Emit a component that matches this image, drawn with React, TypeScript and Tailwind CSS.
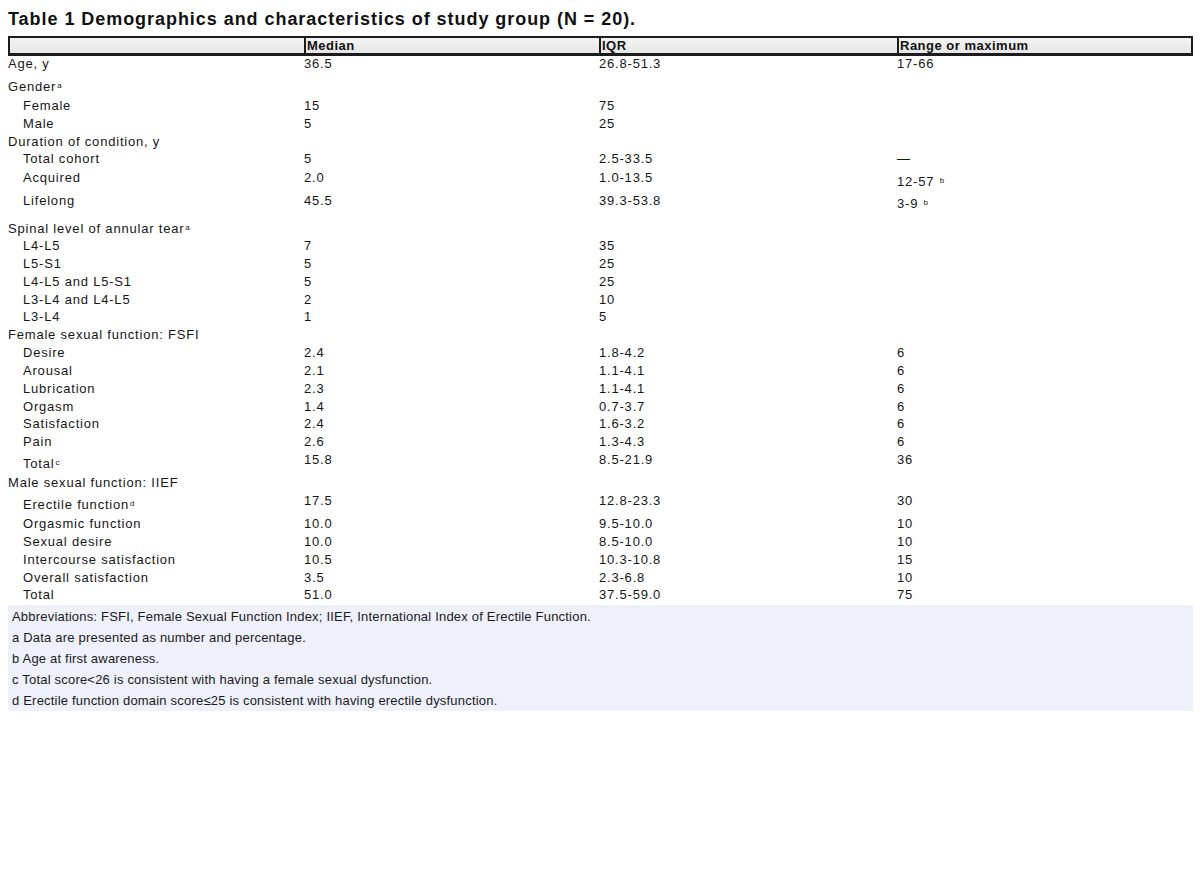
import React from "react";

type Row = {
  label: React.ReactNode;
  indent?: boolean;
  med?: string;
  iqr?: string;
  range?: React.ReactNode;
  mt: string;
};

const Sup = ({ c }: { c: string }) => (
  <sup className="text-[8px] relative -top-[3px] ml-[1px]">{c}</sup>
);

const rows: Row[] = [
  { label: "Age, y", med: "36.5", iqr: "26.8-51.3", range: "17-66", mt: "mt-[1px]" },
  { label: <>Gender<Sup c="a" /></>, mt: "mt-[9px]" },
  { label: "Female", indent: true, med: "15", iqr: "75", mt: "mt-[5px]" },
  { label: "Male", indent: true, med: "5", iqr: "25", mt: "mt-[4px]" },
  { label: "Duration of condition, y", mt: "mt-[4px]" },
  { label: "Total cohort", indent: true, med: "5", iqr: "2.5-33.5", range: "—", mt: "mt-[3px]" },
  { label: "Acquired", indent: true, med: "2.0", iqr: "1.0-13.5", range: <span className="relative top-[4px]">12-57 <Sup c="b" /></span>, mt: "mt-[5px]" },
  { label: "Lifelong", indent: true, med: "45.5", iqr: "39.3-53.8", range: <span className="relative top-[3px]">3-9 <Sup c="b" /></span>, mt: "mt-[9px]" },
  { label: <>Spinal level of annular tear<Sup c="a" /></>, mt: "mt-[14px]" },
  { label: "L4-L5", indent: true, med: "7", iqr: "35", mt: "mt-[3px]" },
  { label: "L5-S1", indent: true, med: "5", iqr: "25", mt: "mt-[4px]" },
  { label: "L4-L5 and L5-S1", indent: true, med: "5", iqr: "25", mt: "mt-[4px]" },
  { label: "L3-L4 and L4-L5", indent: true, med: "2", iqr: "10", mt: "mt-[4px]" },
  { label: "L3-L4", indent: true, med: "1", iqr: "5", mt: "mt-[3px]" },
  { label: "Female sexual function: FSFI", mt: "mt-[4px]" },
  { label: "Desire", indent: true, med: "2.4", iqr: "1.8-4.2", range: "6", mt: "mt-[4px]" },
  { label: "Arousal", indent: true, med: "2.1", iqr: "1.1-4.1", range: "6", mt: "mt-[4px]" },
  { label: "Lubrication", indent: true, med: "2.3", iqr: "1.1-4.1", range: "6", mt: "mt-[4px]" },
  { label: "Orgasm", indent: true, med: "1.4", iqr: "0.7-3.7", range: "6", mt: "mt-[4px]" },
  { label: "Satisfaction", indent: true, med: "2.4", iqr: "1.6-3.2", range: "6", mt: "mt-[3px]" },
  { label: "Pain", indent: true, med: "2.6", iqr: "1.3-4.3", range: "6", mt: "mt-[4px]" },
  { label: <span className="relative top-[4px]">Total<Sup c="c" /></span>, indent: true, med: "15.8", iqr: "8.5-21.9", range: "36", mt: "mt-[4px]" },
  { label: "Male sexual function: IIEF", mt: "mt-[9px]" },
  { label: <span className="relative top-[4px]">Erectile function<Sup c="d" /></span>, indent: true, med: "17.5", iqr: "12.8-23.3", range: "30", mt: "mt-[4px]" },
  { label: "Orgasmic function", indent: true, med: "10.0", iqr: "9.5-10.0", range: "10", mt: "mt-[9px]" },
  { label: "Sexual desire", indent: true, med: "10.0", iqr: "8.5-10.0", range: "10", mt: "mt-[4px]" },
  { label: "Intercourse satisfaction", indent: true, med: "10.5", iqr: "10.3-10.8", range: "15", mt: "mt-[4px]" },
  { label: "Overall satisfaction", indent: true, med: "3.5", iqr: "2.3-6.8", range: "10", mt: "mt-[4px]" },
  { label: "Total", indent: true, med: "51.0", iqr: "37.5-59.0", range: "75", mt: "mt-[3px]" },
];

const notes = [
  "Abbreviations: FSFI, Female Sexual Function Index; IIEF, International Index of Erectile Function.",
  "a Data are presented as number and percentage.",
  "b Age at first awareness.",
  "c Total score<26 is consistent with having a female sexual dysfunction.",
  "d Erectile function domain score≤25 is consistent with having erectile dysfunction.",
];

export default function App() {
  return (
    <div
      className="w-[1200px] h-[872px] bg-white text-[#161616] px-[8px] pt-[9px]"
      style={{ fontFamily: '"Liberation Sans", Arial, sans-serif' }}
    >
      <h1 className="text-[18px] font-bold leading-[20px] tracking-[0.95px] text-[#111] h-[20px] whitespace-nowrap">
        Table 1 Demographics and characteristics of study group (N = 20).
      </h1>
      <div className="mt-[7px] w-[1185px]">
        <div className="flex h-[20px] border-2 border-b-[3px] border-[#1c1c1c] bg-gradient-to-b from-[#f4f4f4] to-[#e6e6e6] text-[13px] font-bold leading-[15px] tracking-[0.5px] text-[#111]">
          <div className="w-[294px]" />
          <div className="w-[295px] border-l-2 border-[#1c1c1c] pl-[1px]">Median</div>
          <div className="w-[298px] border-l-2 border-[#1c1c1c] pl-[1px]">IQR</div>
          <div className="flex-1 border-l-2 border-[#1c1c1c] pl-[1px]">Range or maximum</div>
        </div>
        <div className="flex flex-col text-[13px] leading-[14px] tracking-[0.8px]">
          {rows.map((r, i) => (
            <div key={i} className={`flex h-[14px] whitespace-nowrap ${r.mt}`}>
              <div className={`w-[296px] ${r.indent ? "pl-[15px]" : ""}`}>{r.label}</div>
              <div className="w-[295px]">{r.med}</div>
              <div className="w-[298px]">{r.iqr}</div>
              <div className="flex-1">{r.range}</div>
            </div>
          ))}
        </div>
        <div className="mt-[3px] bg-[#eef0fb] pl-[4px] pt-[1px] text-[13px] leading-[21px] text-[#1a1a1a] tracking-[0.2px]">
          {notes.map((n, i) => (
            <div key={i} className="whitespace-nowrap">{n}</div>
          ))}
        </div>
      </div>
    </div>
  );
}
